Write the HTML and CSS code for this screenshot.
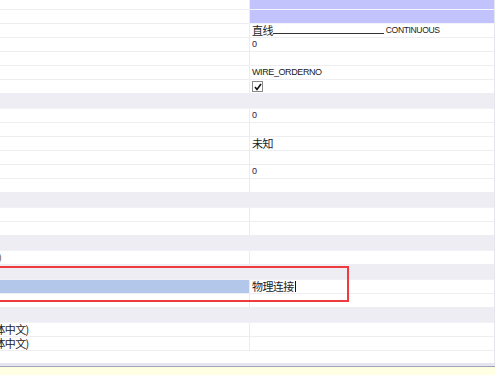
FILE: index.html
```html
<!DOCTYPE html>
<html lang="zh">

<head>
    <meta charset="UTF-8">
    <title>属性</title>
    <link rel="stylesheet" href="styles.css">
</head>

<body>
    <div class="grid">
        <div class="rows">
            <div class="row top"><div class="key"></div><div class="val hl"></div></div>
            <div class="row"><div class="key"></div><div class="val hl"></div></div>
            <div class="row"><div class="key"></div><div class="val"><span class="cjk">直线</span><span class="line"></span><span class="small">CONTINUOUS</span></div></div>
            <div class="row"><div class="key"></div><div class="val num">0</div></div>
            <div class="row"><div class="key"></div><div class="val"></div></div>
            <div class="row"><div class="key"></div><div class="val lat">WIRE_ORDERNO</div></div>
            <div class="row"><div class="key"></div><div class="val"><span class="check"><svg width="8" height="8" viewBox="0 0 8 8"><path d="M1 4 L3 6.5 L7 1" fill="none" stroke="#111" stroke-width="1.6"/></svg></span></div></div>
            <div class="cat"></div>
            <div class="row"><div class="key"></div><div class="val num">0</div></div>
            <div class="row"><div class="key"></div><div class="val"></div></div>
            <div class="row"><div class="key"></div><div class="val cjk">未知</div></div>
            <div class="row"><div class="key"></div><div class="val"></div></div>
            <div class="row"><div class="key"></div><div class="val num">0</div></div>
            <div class="row"><div class="key"></div><div class="val"></div></div>
            <div class="cat"></div>
            <div class="row"><div class="key"></div><div class="val"></div></div>
            <div class="row"><div class="key"></div><div class="val"></div></div>
            <div class="cat"></div>
            <div class="row"><div class="key clip"><span class="cut">)</span></div><div class="val"></div></div>
            <div class="cat"></div>
            <div class="row"><div class="key sel"></div><div class="val cjk">物理连接<span class="caret"></span></div></div>
            <div class="row"><div class="key"></div><div class="val"></div></div>
            <div class="cat"></div>
            <div class="row"><div class="key clip cjk"><span class="shift">简体中文)</span></div><div class="val"></div></div>
            <div class="row"><div class="key clip cjk"><span class="shift">简体中文)</span></div><div class="val"></div></div>
        </div>
        <div class="mark"></div>
    </div>
    <div class="status"></div>
</body>

</html>
```

FILE: styles.css
```css
body {
    margin: 0;
    width: 495px;
    height: 375px;
    overflow: hidden;
    background: #fff;
    font-family: "Liberation Sans", "Noto Sans CJK SC", sans-serif;
    color: #222;
}

.grid {
    position: relative;
    width: 494px;
    height: 363px;
    border-right: 1px solid #e4e6ee;
    overflow: hidden;
}

.rows {
    margin-top: -4px;
}

.row {
    display: flex;
    height: 13px;
    border-bottom: 1px solid #eeeef2;
}

.key {
    width: 249px;
    border-right: 1px solid #ececf0;
    overflow: hidden;
    white-space: nowrap;
    font-size: 11px;
    line-height: 13px;
}

.val {
    flex: 1;
    padding-left: 2px;
    font-size: 9px;
    line-height: 13px;
    white-space: nowrap;
    display: flex;
    align-items: center;
}

.hl {
    background: #c2c2fd;
}

.row.top .val.hl,
.row .val.hl {
    border-bottom: 1px solid #f4f4fb;
    margin-bottom: -1px;
}

.cat {
    height: 14px;
    background: #eeedf3;
    border-bottom: 1px solid #f2f2f6;
}

.sel {
    background: #b3c7ea;
}

.cjk {
    font-family: "Noto Sans CJK SC", sans-serif;
    font-size: 11px;
    letter-spacing: -0.6px;
}

.line {
    display: inline-block;
    width: 111px;
    height: 9px;
    border-bottom: 1px solid #333;
    margin-right: 2px;
    align-self: flex-start;
}

.small {
    font-size: 8.6px;
    letter-spacing: -0.4px;
}

.lat {
    letter-spacing: -0.4px;
}

.num {
    color: #302040;
}

.check {
    width: 9px;
    height: 9px;
    border: 1px solid #888;
    display: flex;
    align-items: center;
    justify-content: center;
    background: #fff;
}

.caret {
    display: inline-block;
    width: 1px;
    height: 11px;
    background: #111;
    margin-left: 1px;
}

.cut {
    display: inline-block;
    margin-left: -2px;
    color: #7a6a50;
}

.shift {
    display: inline-block;
    margin-left: -16px;
}

.mark {
    position: absolute;
    left: -2px;
    top: 266px;
    width: 347px;
    height: 32px;
    border: 2px solid #ef3b3d;
}

.status {
    height: 3px;
    background: #e4e5ee;
    border-bottom: 1px solid #9ea6b6;
    box-shadow: 0 5px 0 5px #ffffe4;
}
```
